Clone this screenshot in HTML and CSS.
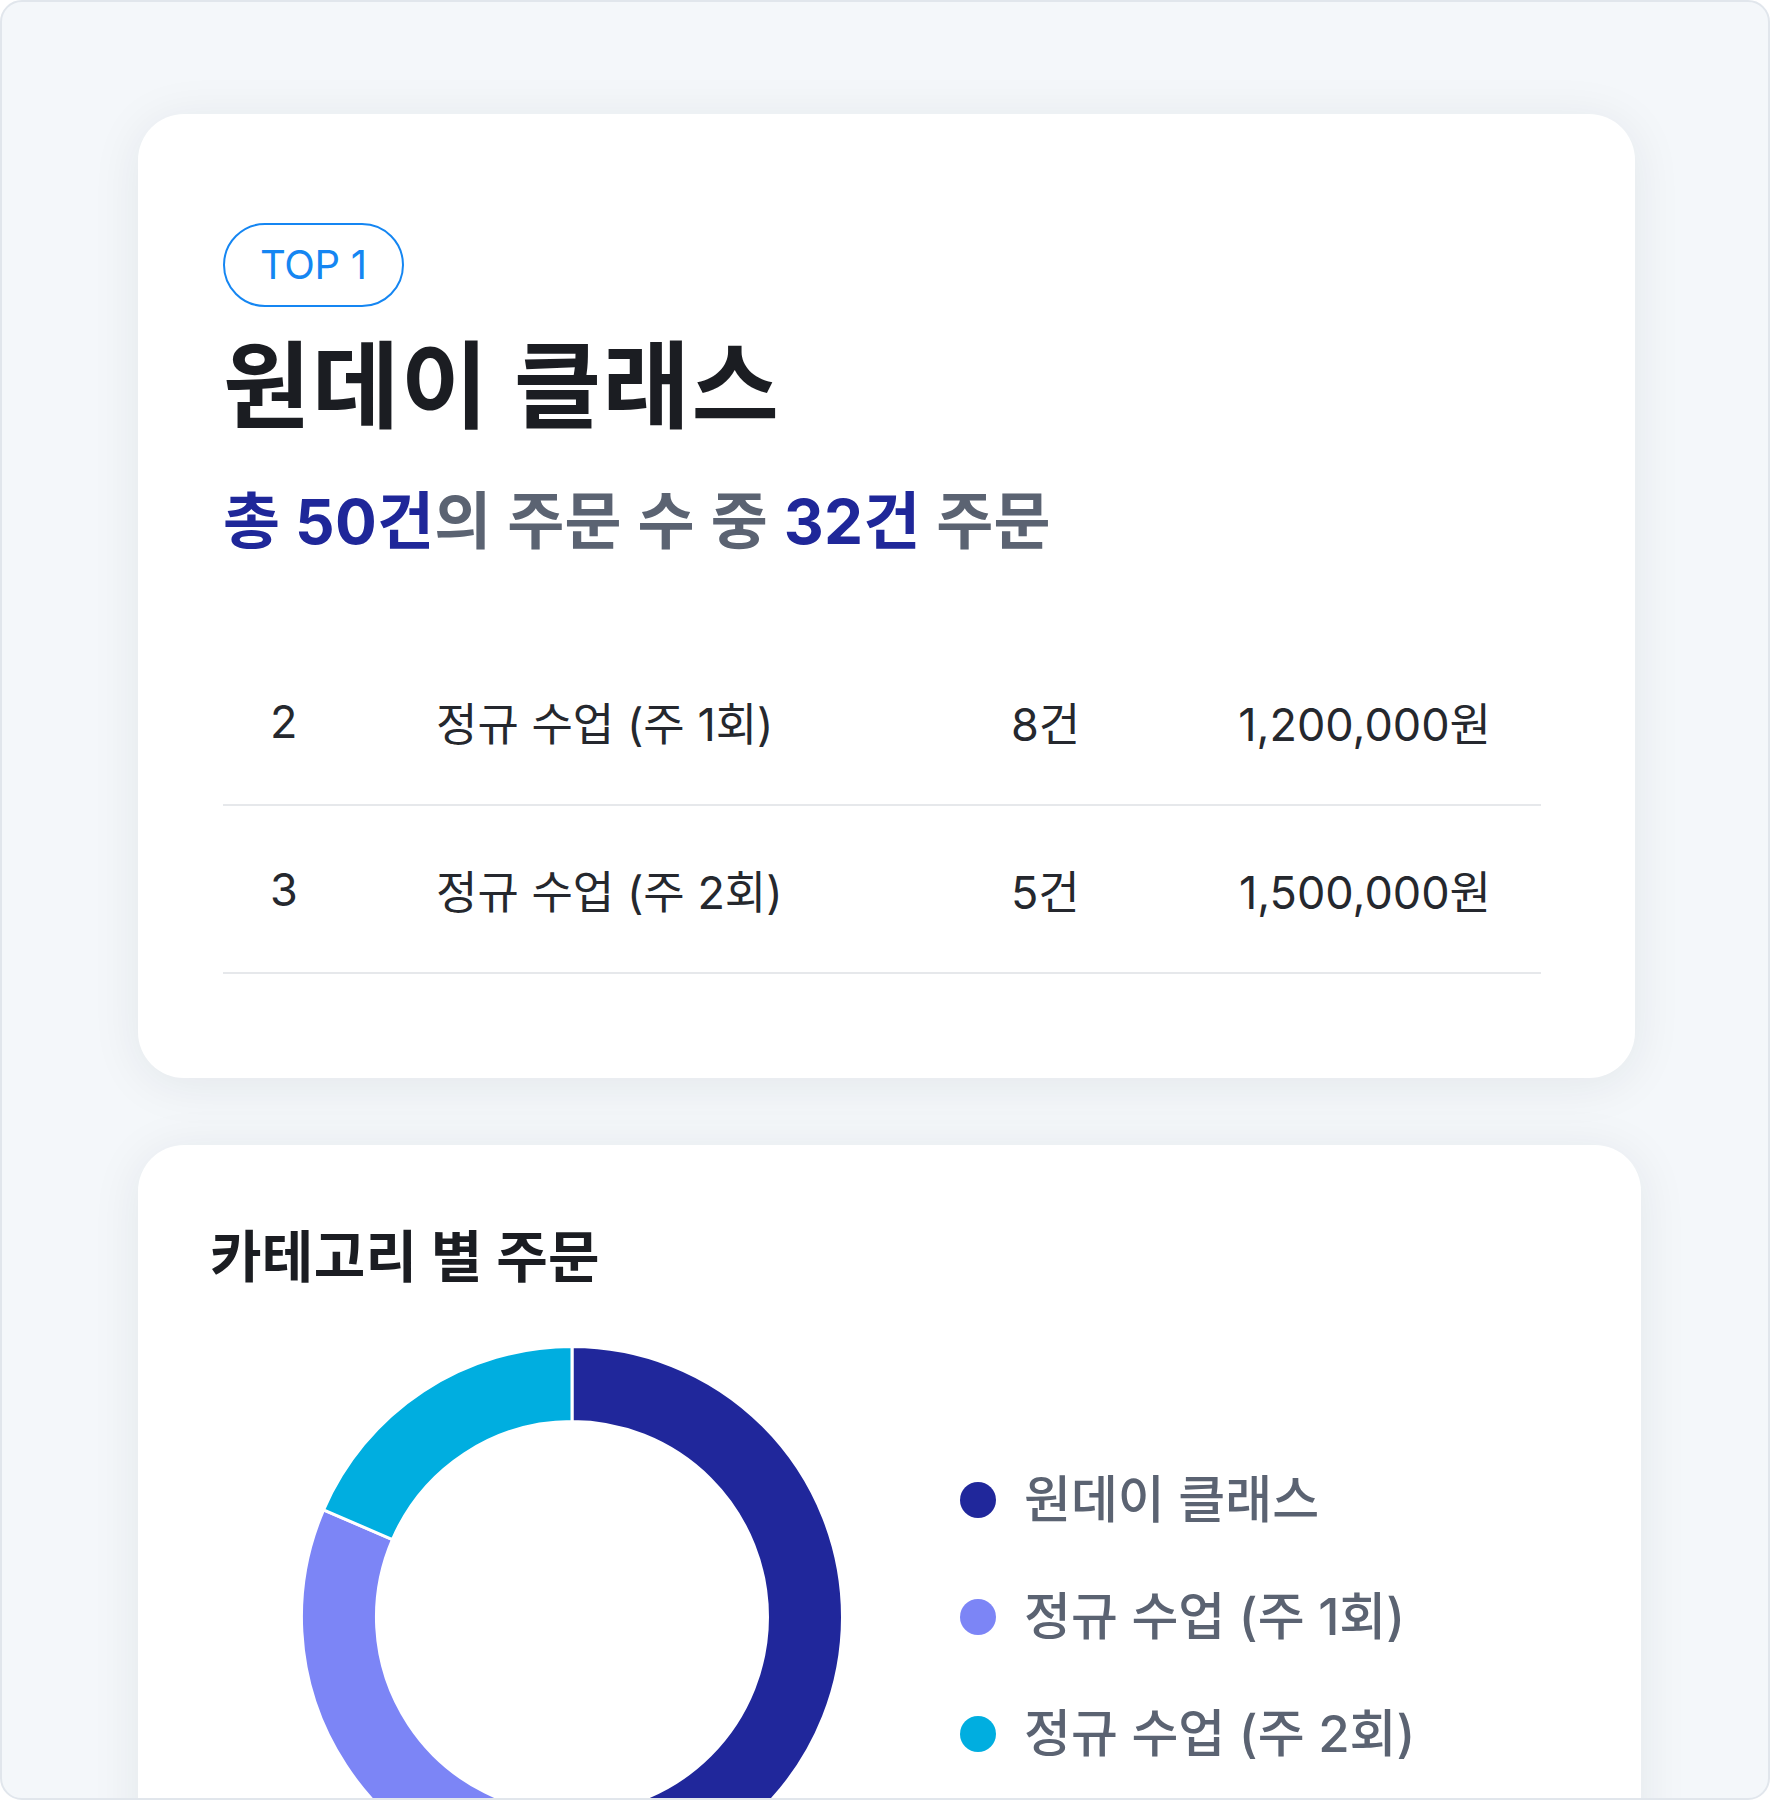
FILE: index.html
```html
<!DOCTYPE html>
<html lang="ko">
<head>
<meta charset="UTF-8" />
<meta name="viewport" content="width=device-width, initial-scale=1" />
<title>주문 통계</title>
<link rel="stylesheet" href="styles.css">
</head>
<body>

<div class="frame">

  <section class="card top-card">
    <span class="badge">TOP 1</span>
    <h1 class="top-title">원데이 클래스</h1>
    <p class="top-summary"><b>총 50건</b>의 주문 수 중 <b>32건</b> 주문</p>

    <div class="rank-table">
      <div class="rank-row">
        <span class="rank">2</span>
        <span class="name">정규 수업 (주 1회)</span>
        <span class="count">8건</span>
        <span class="amount">1,200,000원</span>
      </div>
      <div class="rank-row">
        <span class="rank">3</span>
        <span class="name">정규 수업 (주 2회)</span>
        <span class="count">5건</span>
        <span class="amount">1,500,000원</span>
      </div>
    </div>
  </section>

  <section class="card chart-card">
    <h2 class="chart-title">카테고리 별 주문</h2>
    <div class="chart-body">
      <div class="donut-box">
        <svg class="donut" width="544" height="544" viewBox="-272 -272 544 544">
          <path class="seg-navy" d="M 0 -270.5 A 270.5 270.5 0 0 1 0 270.5 L 0 195.5 A 195.5 195.5 0 0 0 0 -195.5 Z" />
          <path class="seg-lavender" d="M 0 270.5 A 270.5 270.5 0 0 1 -248.43 -107.15 L -179.55 -77.44 A 195.5 195.5 0 0 0 0 195.5 Z" />
          <path class="seg-cyan" d="M -248.43 -107.15 A 270.5 270.5 0 0 1 0 -270.5 L 0 -195.5 A 195.5 195.5 0 0 0 -179.55 -77.44 Z" />
        </svg>
      </div>
      <ul class="legend">
        <li><span class="dot navy"></span>원데이 클래스</li>
        <li><span class="dot lavender"></span>정규 수업 (주 1회)</li>
        <li><span class="dot cyan"></span>정규 수업 (주 2회)</li>
      </ul>
    </div>
  </section>

</div>

</body>
</html>
```

FILE: styles.css
```css
  body {
    margin: 0;
    padding: 0;
    font-family: Inter, "Noto Sans CJK KR", sans-serif;
    color: #1b1d22;
    background-color: #ffffff;
  }
  .frame {
    height: 1800px;
    box-sizing: border-box;
    border: 2px solid #e1e6ec;
    border-radius: 22px;
    background-color: #f4f7fa;
    overflow: hidden;
    padding: 112px 0 0 136px;
  }
  .card {
    background-color: #ffffff;
    border-radius: 46px;
    box-shadow: 0 6px 50px rgba(25, 35, 55, 0.08);
    box-sizing: border-box;
  }
  .top-card {
    width: 1497px;
    padding: 109px 94px 104px 85px;
  }
  .badge {
    display: inline-block;
    border: 2.5px solid #1586f2;
    border-radius: 999px;
    padding: 16px 35px;
    font-size: 40px;
    line-height: 48px;
    color: #1586f2;
    letter-spacing: -0.3px;
  }
  .top-title {
    margin: 25px 0 0 0;
    font-size: 95px;
    line-height: 110px;
    font-weight: 700;
    letter-spacing: 1.5px;
    color: #1b1d22;
  }
  .top-summary {
    margin: 42px 0 0 0;
    font-size: 62px;
    line-height: 76px;
    font-weight: 600;
    letter-spacing: 0.2px;
    color: #5b6372;
  }
  .top-summary b {
    font-weight: 700;
    color: #1f2799;
  }
  .rank-table {
    margin-top: 78px;
  }
  .rank-row {
    display: grid;
    grid-template-columns: 166px 575px 1fr auto;
    align-items: center;
    height: 168px;
    box-sizing: border-box;
    padding: 0 50px 0 47px;
    border-bottom: 2px solid #e6e8eb;
    font-size: 45px;
    color: #25282e;
  }
  .amount {
    text-align: right;
  }
  .chart-card {
    width: 1503px;
    margin-top: 67px;
    padding: 80px 72px 120px 72px;
  }
  .chart-title {
    margin: 0;
    font-size: 56px;
    line-height: 64px;
    font-weight: 700;
    letter-spacing: 0.3px;
    color: #1b1d22;
  }
  .chart-body {
    display: flex;
    align-items: center;
    margin-top: 56px;
  }
  .donut-box {
    width: 724px;
    display: flex;
    justify-content: center;
  }
  .donut {
    display: block;
  }
  .donut path {
    stroke: #ffffff;
    stroke-width: 3;
  }
  .seg-navy { fill: #20279b; }
  .seg-lavender { fill: #7c85f6; }
  .seg-cyan { fill: #00aee0; }
  .legend {
    list-style: none;
    margin: 0 0 0 26px;
    padding: 0;
    display: flex;
    flex-direction: column;
    gap: 57px;
  }
  .legend li {
    display: flex;
    align-items: center;
    gap: 28px;
    font-size: 51px;
    line-height: 60px;
    font-weight: 500;
    color: #5b6372;
  }
  .dot {
    width: 36px;
    height: 36px;
    border-radius: 50%;
  }
  .dot.navy { background-color: #20279b; }
  .dot.lavender { background-color: #7c85f6; }
  .dot.cyan { background-color: #00aee0; }
```
